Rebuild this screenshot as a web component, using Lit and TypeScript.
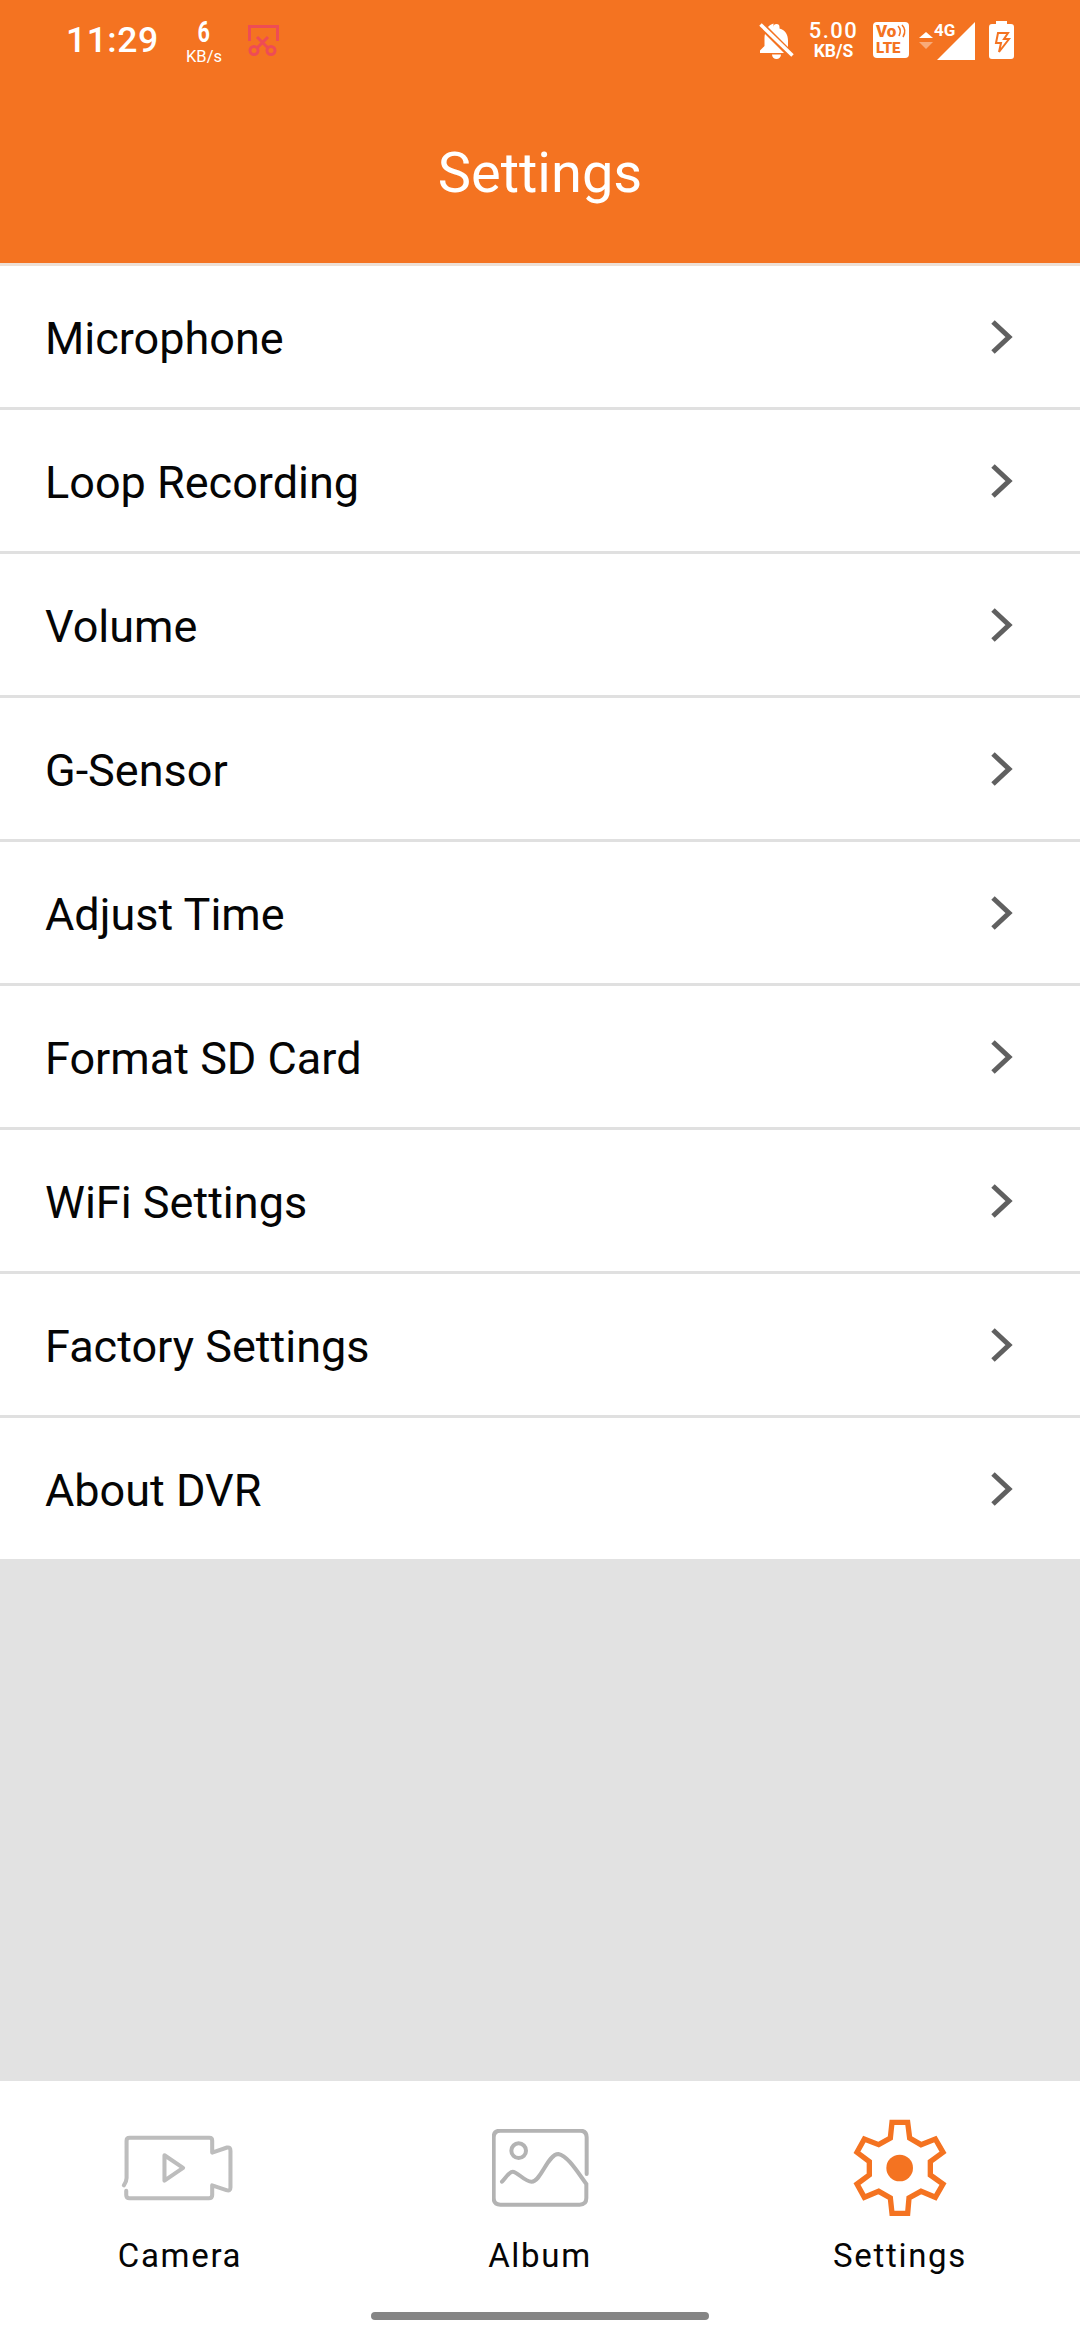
import { LitElement, html, css, svg } from "lit";
import { customElement } from "lit/decorators.js";

const rows = [
  "Microphone",
  "Loop Recording",
  "Volume",
  "G-Sensor",
  "Adjust Time",
  "Format SD Card",
  "WiFi Settings",
  "Factory Settings",
  "About DVR",
];

const scissors = svg`<path d="M1.500 16V1.500h28V16M9 12l11 11M20 12L9 23" fill="none" stroke="#ee4c55" stroke-width="3"/><circle cx="6" cy="25.500" r="4" fill="none" stroke="#ee4c55" stroke-width="3"/><circle cx="23" cy="25.500" r="4" fill="none" stroke="#ee4c55" stroke-width="3"/>`;

const bell = svg`<path d="M17.500 1a3 3 0 0 1 3 3v1.500c6 1.500 8.500 6.500 8.500 12v6.500l-20-20c1.200-1.500 3-2.800 5.500-3.500V4a3 3 0 0 1 3-3zM6 11l19 19H1v-2.500l4.500-4.500v-6c0-2.600 0-4.500.5-6zM13 31.500h9a4.500 4.500 0 0 1-9 0z" fill="#fff"/><path d="M1.500 1.500l32 31" stroke="#fff" stroke-width="3.500"/>`;

const gearPath = "M515 185L562 185L568 232L602 252L645 235L668 275L630 303L630 343L668 370L645 410L602 392L566 412L562 458L515 458L510 412L475 392L432 410L410 370L447 343L447 303L410 275L432 235L475 252L510 232Z";

@customElement("app-root")
export class AppRoot extends LitElement {
  static styles = css`
    :host {
      display: block;
      width: 1080px;
      height: 2340px;
      font-family: Roboto, "Liberation Sans", sans-serif;
      background: #e2e2e2;
    }
    .page {
      position: relative;
      display: flex;
      flex-direction: column;
      height: 2340px;
    }
    .header {
      background: #f47321;
      height: 263px;
      border-bottom: 3px solid #ede0d6;
      color: #fff;
      flex: none;
    }
    .status {
      display: flex;
      justify-content: space-between;
      height: 80px;
      padding: 0 66px;
    }
    .side {
      display: flex;
      align-items: flex-start;
    }
    .clock {
      font-size: 35.500px;
      font-weight: 500;
      letter-spacing: 0.5px;
      line-height: 41px;
      margin-top: 20px;
      width: 119px;
    }
    .speed {
      display: flex;
      flex-direction: column;
      align-items: center;
      width: 38px;
      margin-top: 19px;
    }
    .speed b {
      font-size: 30px;
      font-weight: 700;
      line-height: 26px;
      transform: scaleX(0.72);
    }
    .speed span {
      font-size: 16.500px;
      line-height: 17px;
      margin-top: 3px;
    }
    .cut {
      margin: 25px 0 0 25px;
    }
    .bell {
      margin: 23px 15px 0 0;
    }
    .rate {
      display: flex;
      flex-direction: column;
      align-items: center;
      width: 49px;
      margin: 20px 15px 0 0;
    }
    .rate b {
      font-size: 22px;
      font-weight: 500;
      letter-spacing: 1.500px;
      line-height: 22px;
    }
    .rate span {
      font-size: 17.500px;
      font-weight: 700;
      line-height: 18px;
    }
    .volte {
      position: relative;
      display: flex;
      flex-direction: column;
      width: 36px;
      height: 36px;
      box-sizing: border-box;
      margin: 22px 10px 0 0;
      padding: 1px 0 0 3px;
      border-radius: 4px;
      background: #fff;
      color: #f47321;
      font-weight: 900;
    }
    .volte .vo {
      font-size: 17px;
      line-height: 17px;
    }
    .volte .lte {
      font-size: 15px;
      line-height: 16px;
    }
    .volte svg {
      position: absolute;
      left: 0;
      top: 0;
    }
    .signal {
      position: relative;
      width: 57px;
      height: 38px;
      margin: 22px 13px 0 0;
    }
    .signal span {
      position: absolute;
      left: 15px;
      top: 0;
      font-size: 17px;
      font-weight: 700;
      line-height: 17px;
    }
    .battery {
      margin-top: 21px;
    }
    .title {
      text-align: center;
      font-size: 56px;
      line-height: 64px;
      padding-top: 61px;
    }
    .list {
      flex: none;
    }
    .row {
      display: flex;
      align-items: center;
      justify-content: space-between;
      height: 141px;
      background: #fff;
      border-bottom: 3px solid #e0e0e0;
      padding: 0 66px 0 45px;
      font-size: 45px;
      color: #050505;
    }
    .row span {
      padding-top: 3px;
    }
    .row:last-child {
      border-bottom: none;
    }
    .gap {
      flex: 1;
    }
    .nav {
      flex: none;
      height: 259px;
      background: #fff;
      display: grid;
      grid-template-columns: repeat(3, 360px);
    }
    .tab {
      display: flex;
      flex-direction: column;
      align-items: center;
      color: #050505;
      font-size: 33px;
      letter-spacing: 1.700px;
    }
    .icon {
      height: 98px;
      margin-top: 38px;
      display: flex;
      align-items: center;
      justify-content: center;
    }
    .camera {
      margin-right: 5px;
    }
    .label {
      line-height: 40px;
      margin-top: 19px;
    }
    .home {
      position: absolute;
      left: 371px;
      top: 2312px;
      width: 338px;
      height: 8px;
      border-radius: 4px;
      background: #858585;
    }
  `;

  render() {
    return html`
      <div class="page">
        <div class="header">
          <div class="status">
            <div class="side">
              <div class="clock">11:29</div>
              <div class="speed"><b>6</b><span>KB/s</span></div>
              <svg class="cut" width="31" height="32" viewBox="0 0 31 32">${scissors}</svg>
            </div>
            <div class="side">
              <svg class="bell" width="35" height="36" viewBox="0 0 35 36">${bell}</svg>
              <div class="rate"><b>5.00</b><span>KB/S</span></div>
              <div class="volte">
                <span class="vo">Vo</span>
                <span class="lte">LTE</span>
                <svg width="36" height="36" viewBox="0 0 36 36">
                  <path d="M25 4q4 4 1 10M29 3q5 5 1 12" fill="none" stroke="#f47321" stroke-width="1.600"/>
                </svg>
              </div>
              <div class="signal">
                <svg width="57" height="38" viewBox="0 0 57 38">
                  <path d="M0 16L7 10L14 16z" fill="#fff"/>
                  <path d="M0 20L7 27L14 20z" fill="#fff" opacity=".4"/>
                  <path d="M18 38L56 0v38z" fill="#fff"/>
                </svg>
                <span>4G</span>
              </div>
              <svg class="battery" width="25" height="38" viewBox="0 0 25 38">
                <path d="M7 0h11v3h4a3 3 0 0 1 3 3v29a3 3 0 0 1-3 3H3a3 3 0 0 1-3-3V6a3 3 0 0 1 3-3h4z" fill="#fff"/>
                <path d="M9 12h10l-4 6h5L10 31l2-9H7z" fill="none" stroke="#f47321" stroke-width="2"/>
              </svg>
            </div>
          </div>
          <div class="title">Settings</div>
        </div>
        <div class="list">
          ${rows.map(
            (r) => html`<div class="row">
              <span>${r}</span>
              <svg width="24" height="36" viewBox="0 0 24 36"><path d="M3 3l16 15L3 33" fill="none" stroke="#606060" stroke-width="5"/></svg>
            </div>`
          )}
        </div>
        <div class="gap"></div>
        <div class="nav">
          <div class="tab">
            <div class="icon">
              <svg class="camera" width="113" height="67" viewBox="368 223 331 198">
                <path d="M375 372Q383 360 383 350L383 240Q383 231 392 231L628 231Q636 231 636 240L636 275L680 260Q690 258 690 270L690 378Q690 390 678 386L636 372L636 400Q636 410 626 410L392 410Q382 410 382 400L382 388M495 283L550 320L495 358Z" fill="none" stroke="#bdbdbd" stroke-width="12" stroke-linejoin="round" stroke-linecap="round"/>
              </svg>
            </div>
            <div class="label">Camera</div>
          </div>
          <div class="tab">
            <div class="icon">
              <svg width="97" height="79" viewBox="393 210 291 237">
                <path d="M677 345L677 235Q677 215 657 215L418 215Q398 215 398 235L398 417Q398 437 418 437L656 437Q676 437 676 417L676 375C650 340 620 290 592 285C560 285 540 368 512 368C490 368 470 338 455 338C445 338 435 355 423 368" fill="none" stroke="#b3b3b3" stroke-width="12" stroke-linecap="round"/>
                <circle cx="473" cy="275" r="22" fill="none" stroke="#b3b3b3" stroke-width="12"/>
              </svg>
            </div>
            <div class="label">Album</div>
          </div>
          <div class="tab">
            <div class="icon">
              <svg width="98" height="98" viewBox="392 175 294 294">
                <path d="${gearPath}" fill="none" stroke="#f47321" stroke-width="16"/>
                <circle cx="538" cy="322" r="40" fill="#f47321"/>
              </svg>
            </div>
            <div class="label">Settings</div>
          </div>
        </div>
        <div class="home"></div>
      </div>
    `;
  }
}
